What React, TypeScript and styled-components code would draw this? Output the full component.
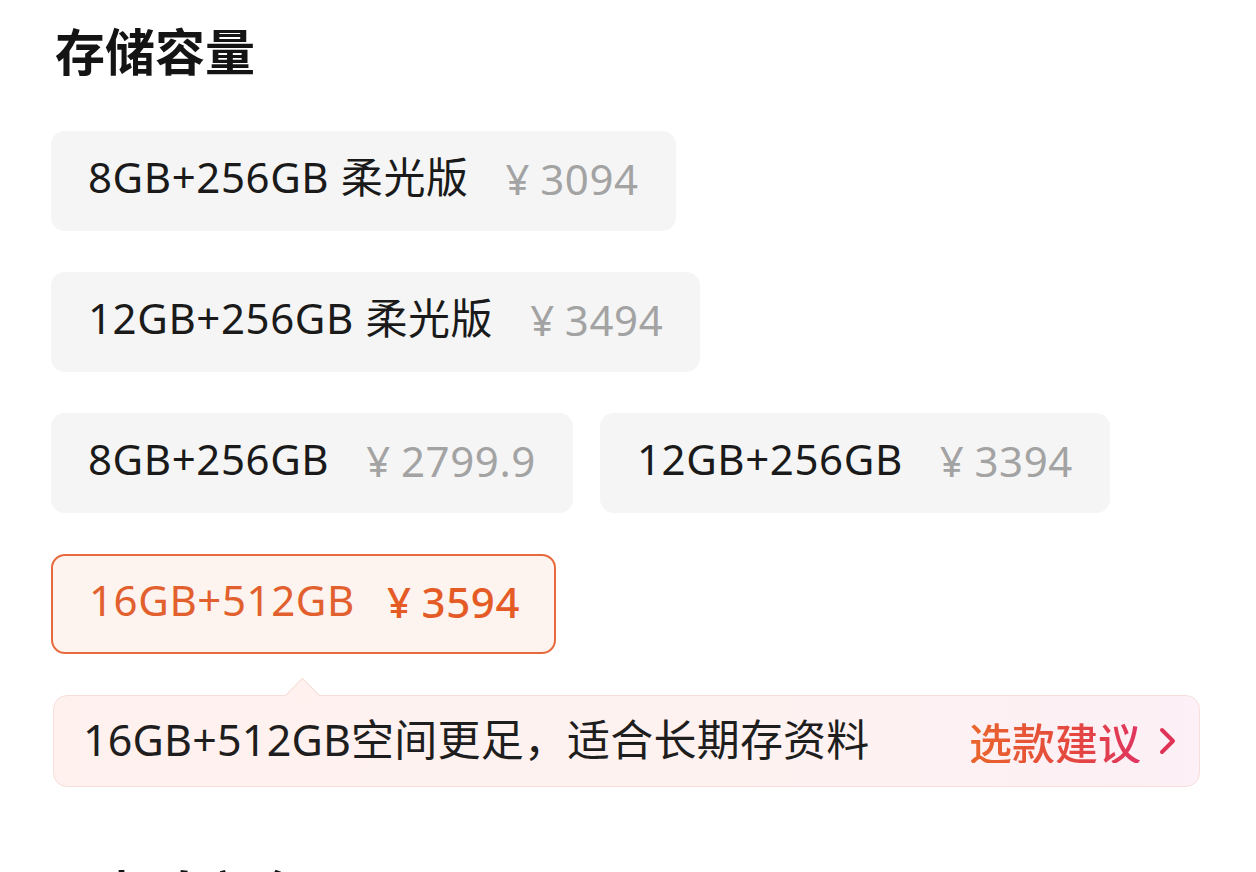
import styled, { createGlobalStyle } from "styled-components";

const GlobalStyle = createGlobalStyle`
  html, body {
    margin: 0;
    padding: 0;
    background: #ffffff;
    overflow: hidden;
  }
  body {
    font-family: "Noto Sans", "Noto Sans CJK SC", sans-serif;
    color: #1a1a1a;
  }
`;

const Page = styled.div`
  width: 1256px;
  height: 872px;
  padding: 25px 56px 0 51px;
  box-sizing: border-box;
  overflow: hidden;
`;

const Heading = styled.h2`
  margin: 0 0 0 4px;
  font-family: "Noto Sans CJK SC", sans-serif;
  font-size: 50px;
  font-weight: 700;
  line-height: 49px;
  color: #141414;
`;

const Options = styled.div`
  display: flex;
  flex-wrap: wrap;
  row-gap: 41px;
  column-gap: 27px;
  margin-top: 57px;
`;

const Chip = styled.div<{ $active?: boolean }>`
  height: 100px;
  box-sizing: border-box;
  display: inline-flex;
  align-items: center;
  gap: ${(p) => (p.$active ? "32px" : "37px")};
  padding: 0 ${(p) => (p.$active ? "34px" : "37px")} 8px ${(p) => (p.$active ? "36px" : "37px")};
  border-radius: 14px;
  background: ${(p) => (p.$active ? "#fdf3ef" : "#f5f5f5")};
  border: ${(p) => (p.$active ? "2px solid #e8693c" : "none")};
  color: ${(p) => (p.$active ? "#e2602d" : "#1a1a1a")};
  font-size: 42px;
  line-height: 1;
  letter-spacing: 0.6px;
  white-space: nowrap;
`;

const Label = styled.span``;

const Price = styled.span<{ $active?: boolean }>`
  color: ${(p) => (p.$active ? "#e55b26" : "#a3a3a3")};
  font-weight: ${(p) => (p.$active ? 500 : 400)};
  margin-top: 3px;
`;

const Yen = styled.span`
  margin-right: 10px;
`;

const Tip = styled.div`
  position: relative;
  margin: 41px 0 0 2px;
  height: 92px;
  box-sizing: border-box;
  display: flex;
  align-items: center;
  justify-content: space-between;
  padding: 0 22px 0 29px;
  border-radius: 14px;
  border: 1px solid #f8dedb;
  background: linear-gradient(90deg, #fef1ee 0%, #fef2f1 60%, #fdf0f6 100%);

  &::before {
    content: "";
    position: absolute;
    left: 236px;
    top: -13px;
    width: 24px;
    height: 24px;
    background: #fef1ee;
    border-left: 1px solid #f8dedb;
    border-top: 1px solid #f8dedb;
    transform: rotate(45deg);
  }
`;

const TipText = styled.span`
  position: relative;
  font-size: 43px;
  line-height: 1;
  color: #1e1e1e;
  letter-spacing: 0.2px;
  margin-top: -4px;
`;

const Advice = styled.span`
  display: flex;
  align-items: center;
  gap: 18px;
  font-family: "Noto Sans CJK SC", sans-serif;
  font-size: 43px;
  font-weight: 500;
  line-height: 1;
`;

const AdviceText = styled.span`
  background: linear-gradient(90deg, #e9662c 0%, #e4483f 60%, #df3560 100%);
  -webkit-background-clip: text;
  background-clip: text;
  color: transparent;
`;

const NextHeading = styled(Heading)`
  margin-top: 80px;
  margin-left: 58px;
`;

const options = [
  { label: "8GB+256GB 柔光版", price: "3094" },
  { label: "12GB+256GB 柔光版", price: "3494" },
  { label: "8GB+256GB", price: "2799.9" },
  { label: "12GB+256GB", price: "3394" },
  { label: "16GB+512GB", price: "3594", active: true },
];

export default function App() {
  return (
    <Page>
      <GlobalStyle />
      <Heading>存储容量</Heading>
      <Options>
        {options.map((o) => (
          <Chip key={o.label + o.price} $active={o.active}>
            <Label>{o.label}</Label>
            <Price $active={o.active}>
              <Yen>¥</Yen>
              {o.price}
            </Price>
          </Chip>
        ))}
      </Options>
      <Tip>
        <TipText>16GB+512GB空间更足，适合长期存资料</TipText>
        <Advice>
          <AdviceText>选款建议</AdviceText>
          <svg width="18" height="28" viewBox="0 0 18 28" fill="none">
            <path d="M3 3 L14 14 L3 25" stroke="#df3458" strokeWidth="4" strokeLinecap="round" strokeLinejoin="round" />
          </svg>
        </Advice>
      </Tip>
      <NextHeading>机身颜色</NextHeading>
    </Page>
  );
}
